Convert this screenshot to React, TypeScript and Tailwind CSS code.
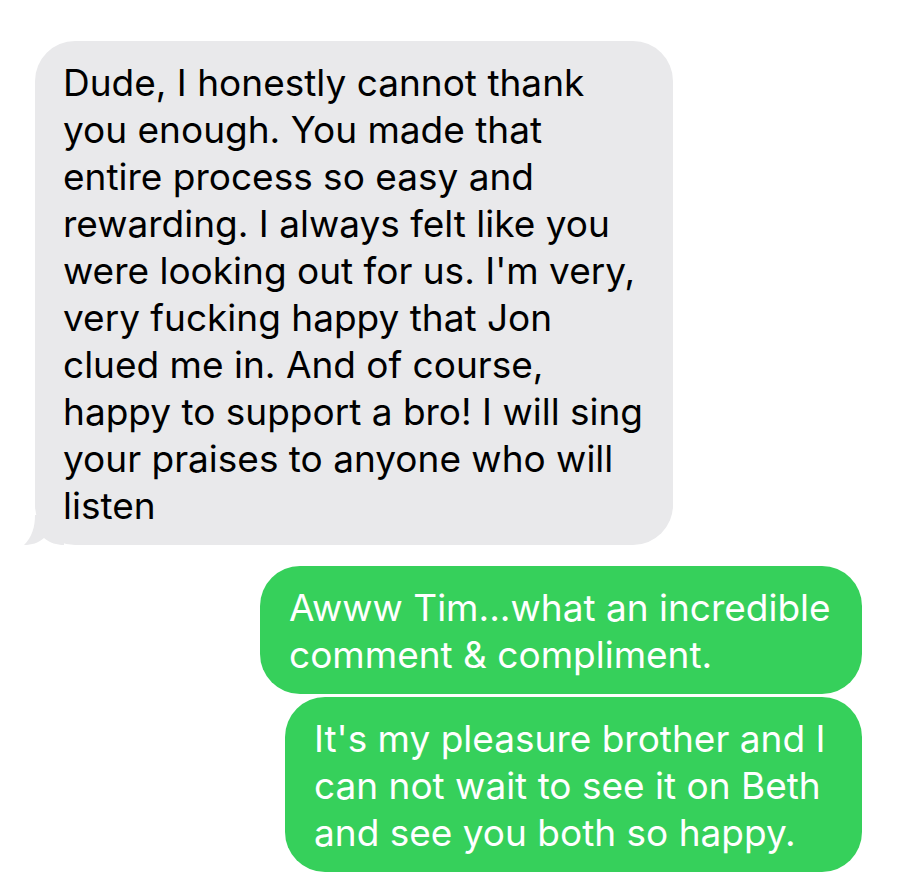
const font = { fontFamily: 'Inter, "Noto Sans", sans-serif' };

function Bubble({ lines, sent, className }: { lines: string[]; sent?: boolean; className: string }) {
  return (
    <div
      className={`relative rounded-[40px] pt-[18px] pb-[16px] text-[37px] leading-[47px] ${
        sent ? 'bg-[#36d05b] text-white pl-[29px]' : 'bg-[#e9e9eb] text-black pl-[28px]'
      } ${className}`}
    >
      {lines.map((l, i) => (
        <div key={i} className="whitespace-nowrap">
          {l}
        </div>
      ))}
      {!sent && (
        <svg className="absolute left-[-11px] bottom-0" width="40" height="30" viewBox="0 0 40 30">
          <path d="M11 0 C11 12 8 22 0 30 C8 30 14 28 20 23 C26 28 33 30 40 30 L40 0 Z" fill="#e9e9eb" />
        </svg>
      )}
    </div>
  );
}

export default function App() {
  return (
    <div className="min-h-screen bg-white" style={font}>
      <div className="flex flex-col pt-[41px]">
        <Bubble
          className="ml-[35px] w-[638px]"
          lines={[
            'Dude, I honestly cannot thank',
            'you enough. You made that',
            'entire process so easy and',
            'rewarding. I always felt like you',
            "were looking out for us. I'm very,",
            'very fucking happy that Jon',
            'clued me in. And of course,',
            'happy to support a bro! I will sing',
            'your praises to anyone who will',
            'listen',
          ]}
        />
        <Bubble
          sent
          className="mt-[21px] ml-[260px] w-[602px]"
          lines={['Awww Tim...what an incredible', 'comment & compliment.']}
        />
        <Bubble
          sent
          className="mt-[3px] ml-[285px] w-[577px]"
          lines={["It's my pleasure brother and I", 'can not wait to see it on Beth', 'and see you both so happy.']}
        />
      </div>
    </div>
  );
}
